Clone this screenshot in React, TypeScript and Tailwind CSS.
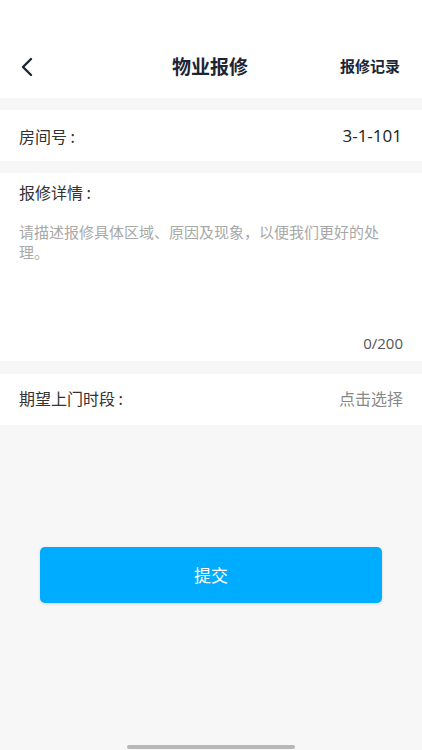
import React from "react";

const font = { fontFamily: '"Noto Sans CJK SC", "Noto Sans", sans-serif' };

const App = () => {
  return (
    <div className="w-[422px] h-[750px] bg-[#f7f7f7] flex flex-col relative overflow-hidden" style={font}>
      <div className="h-[98px] bg-white flex items-end pb-[19px] pl-[20px] pr-[22px]">
        <div className="flex-1 flex">
          <button className="w-[24px] h-[24px] flex items-center">
            <svg width="14" height="20" viewBox="0 0 14 20" fill="none">
              <path d="M11 2 L3 10 L11 18" stroke="#1b2533" strokeWidth="2.4" strokeLinecap="round" strokeLinejoin="round" />
            </svg>
          </button>
        </div>
        <div className="text-[19px] font-bold text-[#1b2533] leading-[26px]">物业报修</div>
        <div className="flex-1 text-right text-[15px] font-bold text-[#1b2533] leading-[26px]">报修记录</div>
      </div>
      <div className="mt-[12px] h-[51px] bg-white flex items-center justify-between px-[19px]">
        <span className="text-[16px] text-[#333]">房间号 :</span>
        <span className="text-[17px] text-[#222] pr-[1px]" style={{ fontFamily: '"Open Sans", "Noto Sans", sans-serif' }}>3-1-101</span>
      </div>
      <div className="mt-[12px] h-[188px] bg-white flex flex-col px-[19px] pt-[7px]">
        <span className="text-[16px] text-[#333] leading-[24px]">报修详情 :</span>
        <p className="mt-[18px] text-[15px] text-[#a8a8a8] leading-[20px] pr-[20px]">请描述报修具体区域、原因及现象，以便我们更好的处理。</p>
        <div className="mt-auto mb-[8px] text-right text-[15px] text-[#555] leading-[20px]" style={{ fontFamily: '"Open Sans", "Noto Sans", sans-serif' }}>0/200</div>
      </div>
      <div className="mt-[13px] h-[51px] bg-white flex items-center justify-between px-[19px] pb-[3px]">
        <span className="text-[16px] text-[#333]">期望上门时段 :</span>
        <span className="text-[16px] text-[#888]">点击选择</span>
      </div>
      <div className="mt-[122px] px-[40px]">
        <button className="w-full h-[56px] rounded-[5px] bg-[#00acff] text-white text-[17px] shadow-[0_1px_3px_rgba(0,0,0,0.15)]">提交</button>
      </div>
      <div className="absolute bottom-[1px] left-[127px] w-[168px] h-[4px] rounded-full bg-[#b8b8b8]" />
    </div>
  );
};

export default App;
